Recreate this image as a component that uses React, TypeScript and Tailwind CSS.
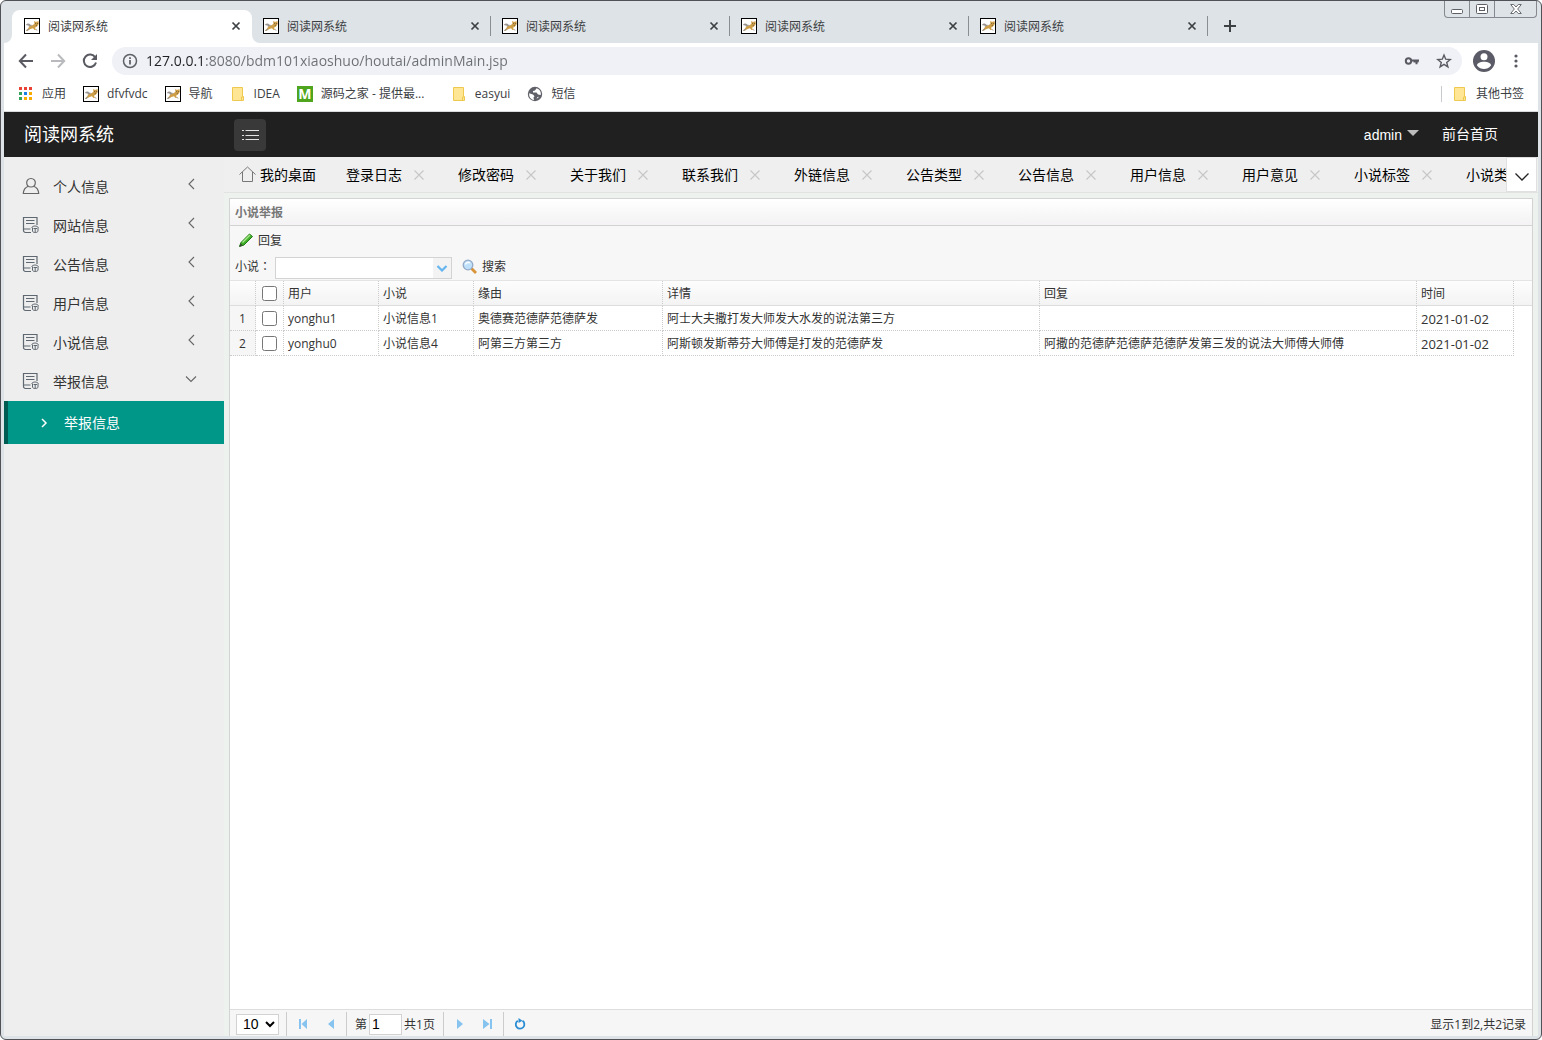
import { useState, type ReactNode } from "react";

const browserTabs = [0, 1, 2, 3, 4];

const menu = ["个人信息", "网站信息", "公告信息", "用户信息", "小说信息", "举报信息"];

const pageTabs = [
  "登录日志",
  "修改密码",
  "关于我们",
  "联系我们",
  "外链信息",
  "公告类型",
  "公告信息",
  "用户信息",
  "用户意见",
  "小说标签",
  "小说类型",
];

const rows = [
  {
    user: "yonghu1",
    novel: "小说信息1",
    reason: "奥德赛范德萨范德萨发",
    detail: "阿士大夫撒打发大师发大水发的说法第三方",
    reply: "",
    date: "2021-01-02",
  },
  {
    user: "yonghu0",
    novel: "小说信息4",
    reason: "阿第三方第三方",
    detail: "阿斯顿发斯蒂芬大师傅是打发的范德萨发",
    reply: "阿撒的范德萨范德萨范德萨发第三发的说法大师傅大师傅",
    date: "2021-01-02",
  },
];

function CatIcon() {
  return (
    <svg className="size-4 shrink-0" viewBox="0 0 16 16">
      <rect x="0.5" y="0.5" width="15" height="15" fill="#fff" stroke="#000" />
      <path d="M5 8.500 9 7l1.500-1.500-.5-2.500 1.500.8h1.500l1.500-.8.3 3L13 8.500l-2 1.200 1 2.300h-1.500L9 10.300 6.500 11 3 13l-1-.4L4.500 10z" fill="#cf9f48" />
      <path d="M2 6.500c1.500-1.200 3-1.200 4.500.2L9 7 5 8.700 4.500 7.500 2.500 7.300z" fill="#9a9490" />
      <path d="M2 12.600l2.500-2 .8.800L3 13zM12 11l2 1.500-2-.2z" fill="#9a9490" />
      <path d="M11 5.500h.8M13 5.500h.8M11.800 7.300h1" stroke="#5a4630" strokeWidth="0.8" />
    </svg>
  );
}

function FolderIcon() {
  return (
    <svg className="size-4 shrink-0" viewBox="0 0 16 16">
      <path d="M2.500 1.500h10v9h1v4h-11z" fill="#ffe694" stroke="#efc84f" />
      <path d="M11.500 14v-3h1.500" fill="none" stroke="#efc84f" />
    </svg>
  );
}

function AppsIcon() {
  const colors = ["#ea4335", "#ea4335", "#ea4335", "#34a15c", "#1a80e8", "#f9ab00", "#34a15c", "#f9ab00", "#f9ab00"];
  return (
    <svg className="size-4 shrink-0" viewBox="0 0 16 16">
      {colors.map((c, i) => (
        <rect key={i} x={1 + (i % 3) * 5} y={1 + Math.floor(i / 3) * 5} width="3" height="3" fill={c} />
      ))}
    </svg>
  );
}

function MIcon() {
  return (
    <span className="flex size-4 shrink-0 items-center justify-center bg-[#4fa51d] text-sm font-bold leading-4 text-white">
      M
    </span>
  );
}

function GlobeIcon() {
  return (
    <svg className="size-4 shrink-0" viewBox="0 0 16 16">
      <circle cx="8" cy="8" r="7.200" fill="#5f6068" />
      <path d="M2.200 7.200 6 8.500l1.500 1.700-1 1.300.5 2.500C3.500 13.500 1.800 10.500 2.200 7.200zM9.500 2.300 8 4.500 6 5v1.500h3.500L11 8.500l2.800.5c.5-3-1-5.800-4.300-6.700zM9.500 12.800l1-1.800 1.500-.2c-.6 1-1.500 1.700-2.500 2z" fill="#fff" />
    </svg>
  );
}

function CloseIcon() {
  return (
    <svg className="size-3" viewBox="0 0 12 12" fill="none" stroke="#3c4043" strokeWidth="1.700">
      <path d="m2.500 2.500 7 7m0-7-7 7" />
    </svg>
  );
}

function Bookmark({ icon, children }: { icon: ReactNode; children: ReactNode }) {
  return (
    <a href="#" className="flex items-center gap-2 whitespace-nowrap">
      {icon}
      {children}
    </a>
  );
}

function BrowserTabs() {
  return (
    <div className="relative flex h-[42px] items-end pl-2">
      {browserTabs.map((i) => (
        <div
          key={i}
          className={
            i === 0
              ? "relative flex h-[33px] w-60 items-center rounded-t-lg bg-white pb-px pl-3 pr-2.5"
              : "flex h-[33px] w-[239px] items-center pb-px pl-[11px]"
          }
        >
          {i === 0 && (
            <>
              <svg className="absolute -left-2 bottom-0 size-2" viewBox="0 0 8 8">
                <path d="M8 0v8H0a8 8 0 0 0 8-8z" fill="#fff" />
              </svg>
              <svg className="absolute -right-2 bottom-0 size-2" viewBox="0 0 8 8">
                <path d="M0 0v8h8a8 8 0 0 1-8-8z" fill="#fff" />
              </svg>
            </>
          )}
          <CatIcon />
          <span className="ml-2 flex-1 pt-0.5">阅读网系统</span>
          <button aria-label="关闭标签页">
            <CloseIcon />
          </button>
          {i > 0 && <span className="ml-[9px] h-5 w-px bg-[#8a8d91]" />}
        </div>
      ))}
      <button aria-label="新标签页" className="mb-2.5 ml-[15px]">
        <svg className="size-3.5" viewBox="0 0 14 14" stroke="#3c4043" strokeWidth="2">
          <path d="M7 1v12M1 7h12" />
        </svg>
      </button>
      <div className="absolute right-px top-0 flex h-[17px] divide-x divide-[#85888e] rounded-b border border-t-0 border-[#85888e]">
        <button aria-label="最小化" className="flex w-[25px] justify-center pt-2">
          <svg className="h-[5px] w-3" viewBox="0 0 12 5">
            <rect x="0.5" y="0.5" width="11" height="4" rx="1" fill="#fff" stroke="#5c5f66" />
          </svg>
        </button>
        <button aria-label="最大化" className="flex w-[25px] justify-center pt-[3px]">
          <svg className="h-2.5 w-3" viewBox="0 0 12 10" fill="#fff" stroke="#5c5f66">
            <rect x="0.5" y="0.5" width="11" height="9" rx="1" />
            <rect x="3.500" y="3.500" width="5" height="3" />
          </svg>
        </button>
        <button aria-label="关闭" className="flex w-[41px] justify-center pt-[3px]">
          <svg className="h-2.5 w-3" viewBox="0 0 12 10" fill="#fff" stroke="#5c5f66" strokeWidth="0.900">
            <path d="M.7.500h3L6 3 8.300.500h3L7.700 5l3.600 4.500h-3L6 7 3.700 9.500h-3L4.300 5z" />
          </svg>
        </button>
      </div>
    </div>
  );
}

function AddressBar() {
  return (
    <div className="flex h-9 items-center bg-white pl-3.5 pr-[18px]">
      <button aria-label="后退">
        <svg className="size-4" viewBox="0 0 16 16" fill="none" stroke="#5a5b62" strokeWidth="2">
          <path d="M15 8H2M8 1.500 1.800 8 8 14.500" />
        </svg>
      </button>
      <button aria-label="前进" className="ml-4">
        <svg className="size-4" viewBox="0 0 16 16" fill="none" stroke="#b9babd" strokeWidth="2">
          <path d="M1 8h13M8 1.500 14.200 8 8 14.500" />
        </svg>
      </button>
      <button aria-label="重新加载" className="ml-4">
        <svg className="size-4" viewBox="0 0 16 16" fill="none" stroke="#5a5b62" strokeWidth="2">
          <path d="M13.300 4.500A6.200 6.200 0 1 0 14 9.500" />
          <path d="M15 1v6H9z" fill="#5a5b62" stroke="none" />
        </svg>
      </button>
      <div className="ml-3.5 flex h-7 flex-1 items-center rounded-full bg-[#eff1f6] px-2.5">
        <svg className="size-4" viewBox="0 0 16 16" fill="none" stroke="#5f6368" strokeWidth="1.500">
          <circle cx="8" cy="8" r="6.500" />
          <path d="M8 7v4.500M8 4.200v1.700" strokeWidth="1.800" />
        </svg>
        <input
          aria-label="地址"
          defaultValue="127.0.0.1:8080/bdm101xiaoshuo/houtai/adminMain.jsp"
          className="ml-2 h-6 flex-1 bg-[linear-gradient(90deg,#202124_60px,#6b6e73_60px)] bg-clip-text pb-0.5 text-sm text-transparent outline-none"
        />
        <svg className="size-4" viewBox="0 0 16 16" fill="none" stroke="#5a5b62" strokeWidth="2">
          <circle cx="4.500" cy="8" r="2.700" />
          <path d="M7 7.500h8M12.500 8v3.200M9.500 8.500h5" />
        </svg>
        <svg className="ml-4 size-4" viewBox="0 0 16 16" fill="none" stroke="#5a5b62" strokeWidth="1.400">
          <path d="m8 2 1.700 4.200 4.500.3-3.500 2.900 1.200 4.500L8 11.400l-3.900 2.500 1.200-4.500L1.800 6.500l4.500-.3z" />
        </svg>
      </div>
      <svg className="ml-[11px] size-[22px]" viewBox="0 0 22 22">
        <circle cx="11" cy="11" r="11" fill="#5a5b66" />
        <circle cx="11" cy="6.800" r="3.500" fill="#fff" />
        <path d="M4 15.500c0-5 14-5 14 0-3.500 4.800-10.500 4.800-14 0z" fill="#fff" />
      </svg>
      <button aria-label="菜单" className="ml-[17px]">
        <svg className="h-4 w-2" viewBox="0 0 8 16" fill="#5a5b62">
          <circle cx="4" cy="3" r="1.600" />
          <circle cx="4" cy="8" r="1.600" />
          <circle cx="4" cy="13" r="1.600" />
        </svg>
      </button>
    </div>
  );
}

function BookmarkBar() {
  return (
    <div className="flex h-[33px] items-center gap-[17px] border-b border-[#d9dadc] bg-white px-3.5 pb-0.5">
      <Bookmark icon={<AppsIcon />}>应用</Bookmark>
      <Bookmark icon={<CatIcon />}>dfvfvdc</Bookmark>
      <Bookmark icon={<CatIcon />}>导航</Bookmark>
      <Bookmark icon={<FolderIcon />}>IDEA</Bookmark>
      <Bookmark icon={<MIcon />}>
        <span className="w-[113px]">源码之家 - 提供最...</span>
      </Bookmark>
      <Bookmark icon={<FolderIcon />}>easyui</Bookmark>
      <Bookmark icon={<GlobeIcon />}>短信</Bookmark>
      <div className="ml-auto border-l border-[#c8cacd] pl-2.5">
        <Bookmark icon={<FolderIcon />}>其他书签</Bookmark>
      </div>
    </div>
  );
}

function Header() {
  return (
    <header className="flex h-[45px] items-center bg-[#202020] text-sm text-white">
      <h1 className="w-[230px] pb-0.5 pl-5 text-lg leading-6">阅读网系统</h1>
      <button aria-label="折叠菜单" className="flex size-8 items-center justify-center rounded-sm bg-[#393939]">
        <svg className="size-[18px]" viewBox="0 0 18 18" stroke="#e4e4e4" strokeWidth="1.200">
          <path d="M1 4.500h2M4.500 4.500H18M1 9.500h2M4.500 9.500H18M1 13.500h2M4.500 13.500H18" />
        </svg>
      </button>
      <nav className="ml-auto flex items-center pr-10">
        <a href="#" className="flex items-center gap-[5px] font-['Liberation_Sans',sans-serif]">
          admin
          <svg className="mb-1 h-1.5 w-3" viewBox="0 0 12 6" fill="#bdbdbd">
            <path d="M0 0h12L6 6z" />
          </svg>
        </a>
        <a href="#" className="ml-[23px] pb-0.5">前台首页</a>
      </nav>
    </header>
  );
}

function MenuIcon({ user }: { user: boolean }) {
  return user ? (
    <svg className="mb-px size-[18px]" viewBox="0 0 18 18" fill="none" stroke="#666" strokeWidth="1.200">
      <path d="M9 1.500c6 0 5.500 8.500 0 8.500s-6-8.500 0-8.500z" />
      <path d="M6.300 9.200C3.500 10.200 1.500 12.500 1.300 16.500h15.400c-.2-4-2.200-6.300-5-7.300" />
    </svg>
  ) : (
    <svg className="mb-px size-[18px]" viewBox="0 0 18 18" fill="none" stroke="#5f6870" strokeWidth="1.200">
      <path d="M9 16.500H3.500a2 2 0 0 1-2-2V1.500h13.500V9M4 4.500h8.500M4 7.500h8.500M2 13h6.500" />
      <path d="M9.500 11.500c2-2 5-2 7 0M10.500 11.500v3.500c0 2 5.500 2 5.500 0v-3.500M13.200 12v4.500M11.500 12.500h3.500" strokeWidth="1" />
    </svg>
  );
}

function Sidebar() {
  const [open, setOpen] = useState("举报信息");

  return (
    <aside className="w-[220px] shrink-0 bg-[#eee] pt-2.5 text-sm text-[#333]">
      {menu.map((name) => (
        <div key={name}>
          <button
            onClick={() => setOpen(open === name ? "" : name)}
            className="flex h-[39px] w-full items-center pl-[18px] pr-[27px]"
          >
            <MenuIcon user={name === "个人信息"} />
            <span className="ml-[13px] flex-1 text-left">{name}</span>
            <svg className="mb-1.5 size-3" viewBox="0 0 12 12" fill="none" stroke="#666" strokeWidth="1.100">
              <path d={open === name ? "m1 3.500 5 5 5-5" : "M9 1 4 6l5 5"} />
            </svg>
          </button>
          {open === name && name === "举报信息" && (
            <a href="#" className="flex h-[43px] items-center border-l-4 border-[#005b52] bg-[#009688] pl-8 text-white">
              <svg className="size-2.5" viewBox="0 0 10 10" fill="none" stroke="#fff" strokeWidth="1.500">
                <path d="m2 1 4 4-4 4" />
              </svg>
              <span className="ml-3.5">举报信息</span>
            </a>
          )}
        </div>
      ))}
    </aside>
  );
}

function PageTabs() {
  return (
    <div className="flex h-9 border-b border-[#e2e2e2] bg-[#efefef] text-sm text-black">
      <div className="flex min-w-0 flex-1 overflow-hidden whitespace-nowrap">
        <a href="#" className="flex shrink-0 items-center gap-1 px-[15px]">
          <svg className="size-[17px]" viewBox="0 0 17 17" fill="none" stroke="#777">
            <path d="M.5 8.500 8.500 1l8 7.500M3.500 6v9.500h10V6" />
          </svg>
          我的桌面
        </a>
        {pageTabs.map((tab) => (
          <div key={tab} className="flex w-28 shrink-0 items-center gap-3 pl-[15px]">
            <a href="#">{tab}</a>
            <button aria-label={"关闭" + tab}>
              <svg className="size-2.5" viewBox="0 0 10 10" stroke="#c6c6c6" strokeWidth="1.100">
                <path d="m.5.500 9 9m0-9-9 9" />
              </svg>
            </button>
          </div>
        ))}
      </div>
      <button aria-label="更多标签" className="mr-px flex w-[31px] items-center justify-center border border-[#e0e0e0] bg-white pt-1">
        <svg className="h-2 w-3.5" viewBox="0 0 14 8" fill="none" stroke="#222" strokeWidth="1.300">
          <path d="m.5.500 6.500 6.500L13.500.500" />
        </svg>
      </button>
    </div>
  );
}

function PencilIcon() {
  return (
    <svg className="size-4" viewBox="0 0 16 16">
      <path d="M1.500 14.500 3 10.500 11.500 2l3 2.500L6 13z" fill="#3fae2a" stroke="#227a16" />
      <path d="m4.500 10.500 7.500-7.500" stroke="#a5e884" strokeWidth="1.400" />
      <path d="m1.300 14.700 1.200-3.500 2.300 2.300z" fill="#3a4a34" />
    </svg>
  );
}

function SearchIcon() {
  return (
    <svg className="size-4" viewBox="0 0 16 16">
      <path d="m9.500 9.500 4.500 4.500" stroke="#d9943a" strokeWidth="2.800" />
      <circle cx="6" cy="6" r="4.800" fill="#bfe0fb" stroke="#94a9c6" strokeWidth="1.300" />
      <path d="M3.500 5.500C4 3.500 6.500 3 8 4" fill="none" stroke="#fff" strokeWidth="1.300" />
    </svg>
  );
}

const line = "border-b border-r border-dotted border-[#ccc] pt-0.5";
const headLine = "border-b border-r border-b-[#ddd] border-r-[#ccc] pt-0.5 [border-right-style:dotted]";
const checkCell = "border-b border-r border-[#ccc]";

function Grid() {
  return (
    <table className="w-full table-fixed border-separate border-spacing-0 text-left">
      <colgroup>
        <col className="w-[26px]" />
        <col className="w-7" />
        <col className="w-[95px]" />
        <col className="w-[95px]" />
        <col className="w-[189px]" />
        <col className="w-[377px]" />
        <col className="w-[377px]" />
        <col className="w-[97px]" />
        <col className="w-[18px]" />
      </colgroup>
      <thead className="bg-linear-to-b from-[#fdfdfd] to-[#f3f3f3]">
        <tr className="h-[25px]">
          <td className={headLine} />
          <th className={checkCell + " border-b-[#ddd] [border-right-style:dotted]"}>
            <input type="checkbox" aria-label="全选" className="mx-auto block size-[15px]" />
          </th>
          {["用户", "小说", "缘由", "详情", "回复", "时间"].map((name) => (
            <th key={name} className={headLine + " px-1 font-normal"}>
              {name}
            </th>
          ))}
          <td className="border-b border-[#ddd]" />
        </tr>
      </thead>
      <tbody>
        {rows.map((row, i) => (
          <tr key={row.user} className="h-[25px]">
            <td className={line + " bg-[#f6f6f6] text-center"}>{i + 1}</td>
            <td className={checkCell + " border-dotted"}>
              <input type="checkbox" aria-label={row.user} className="mx-auto block size-[15px]" />
            </td>
            <td className={line + " px-1"}>{row.user}</td>
            <td className={line + " px-1"}>{row.novel}</td>
            <td className={line + " px-1"}>{row.reason}</td>
            <td className={line + " px-1"}>{row.detail}</td>
            <td className={line + " px-1"}>{row.reply}</td>
            <td className={line + " px-1 text-[13px] leading-4"}>{row.date}</td>
            <td />
          </tr>
        ))}
      </tbody>
    </table>
  );
}

function PagerButton({ label, d }: { label: string; d: string }) {
  return (
    <button aria-label={label} className="flex w-7 justify-center">
      <svg className="size-3" viewBox="0 0 12 12" fill="#86c3ee">
        <path d={d} />
      </svg>
    </button>
  );
}

function Separator() {
  return <span className="h-6 w-px bg-[#ccc]" />;
}

function Pager() {
  return (
    <footer className="flex h-[27px] items-center border-t border-[#ddd] bg-[#f6f6f6] px-1.5 pt-0.5">
      <select
        aria-label="每页条数"
        className="mr-[7px] h-[21px] w-[43px] border border-[#d3d3d3] bg-white pl-0.5 font-['Liberation_Sans',sans-serif] text-sm leading-4 text-black"
      >
        <option>10</option>
        <option>20</option>
        <option>50</option>
      </select>
      <Separator />
      <span className="flex pl-0.5 pr-px">
        <PagerButton label="首页" d="M2 1h2v10H2zM10 1v10L4.500 6z" />
        <PagerButton label="上一页" d="M9 1v10L3 6z" />
      </span>
      <Separator />
      <label className="ml-2 flex items-center gap-0.5">
        <span className="pt-0.5">第</span>
        <input
          defaultValue="1"
          className="h-[21px] w-[33px] border border-[#d3d3d3] bg-white px-0.5 font-['Liberation_Sans',sans-serif] text-sm text-black"
        />
      </label>
      <span className="ml-0.5 mr-2 pt-0.5">共1页</span>
      <Separator />
      <span className="flex pl-0.5 pr-px">
        <PagerButton label="下一页" d="M3 1v10l6-5z" />
        <PagerButton label="末页" d="M1 1v10l6.500-5zM8 1h2v10H8z" />
      </span>
      <Separator />
      <button aria-label="刷新" className="ml-2.5">
        <svg className="size-3" viewBox="0 0 12 12" fill="none" stroke="#2a8dd4" strokeWidth="1.800">
          <path d="M3.800 2.700A4.300 4.300 0 1 0 8.500 2.800" />
          <path d="M4.500 0v5L8.500 2.800z" fill="#2a8dd4" stroke="none" />
        </svg>
      </button>
      <span className="ml-auto pt-0.5">显示1到2,共2记录</span>
    </footer>
  );
}

function Panel() {
  return (
    <section className="mx-[5px] mt-[5px] flex flex-1 flex-col border border-b-0 border-[#d3d3d3] bg-white text-xs text-[#333]">
      <h2 className="flex h-[27px] items-center border-b border-[#d3d3d3] bg-linear-to-b from-white to-[#f4f2f4] pl-[5px] pt-0.5 font-bold text-[#777]">
        小说举报
      </h2>
      <div className="border-b border-[#e4e4e4] bg-[#f7f7f7]">
        <div className="flex h-7 items-center pl-2">
          <button className="flex items-center gap-1">
            <PencilIcon />
            <span className="pt-0.5">回复</span>
          </button>
        </div>
        <div className="flex h-[26px] items-end pb-px pl-[5px]">
          <label htmlFor="novel" className="w-10 self-center">
            小说<span className="font-['Noto_Sans_CJK_TC',sans-serif]">：</span>
          </label>
          <div className="flex h-[22px] w-[177px] border border-[#d3d3d3] bg-white">
            <input id="novel" className="min-w-0 flex-1 px-1 outline-none" />
            <button aria-label="展开" className="flex w-[18px] items-center justify-center bg-[#f3f3f3]">
              <svg className="h-[7px] w-3" viewBox="0 0 12 7" fill="none" stroke="#64b5f0" strokeWidth="2.200">
                <path d="m1.500 1 4.500 4.500L10.500 1" />
              </svg>
            </button>
          </div>
          <button className="ml-2.5 flex items-center gap-1 self-center">
            <SearchIcon />
            搜索
          </button>
        </div>
      </div>
      <Grid />
      <div className="flex-1" />
      <Pager />
    </section>
  );
}

export default function App() {
  return (
    <div className="flex min-h-screen flex-col rounded-md border border-[#505257] bg-[#dee3e7] px-[3px] pb-[3px] font-['Open_Sans','Noto_Sans_CJK_SC',sans-serif] text-xs text-[#3c4043]">
      <BrowserTabs />
      <AddressBar />
      <BookmarkBar />
      <Header />
      <div className="flex flex-1">
        <Sidebar />
        <main className="flex min-w-0 flex-1 flex-col bg-[#eef2ef]">
          <PageTabs />
          <Panel />
        </main>
      </div>
    </div>
  );
}
